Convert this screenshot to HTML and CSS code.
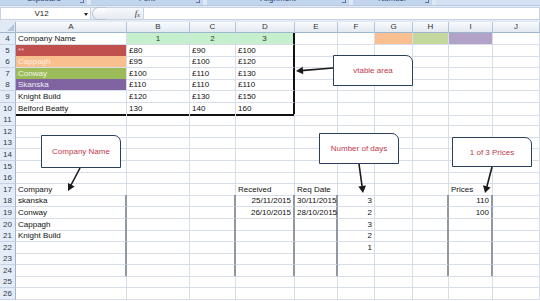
FILE: index.html
```html
<!DOCTYPE html>
<html>
<head>
<meta charset="utf-8">
<link rel="stylesheet" href="styles.css">
</head>
<body>
<div class="app">
  <div class="ribbon">
    <div class="grp g1"><span>Clipboard</span><i class="launch"></i></div>
    <div class="grp g2"><span>Font</span><i class="launch"></i></div>
    <div class="grp g3"><span>Alignment</span><i class="launch"></i></div>
    <div class="grp g4"><span>Number</span><i class="launch"></i></div>
    <div class="grp g5"></div>
  </div>
  <div class="fbar">
    <div class="namebox"><span class="nb-text">V12</span><span class="nb-arrow"></span></div>
    <div class="fxarea"><span class="knob"></span><span class="fx">f<sub>x</sub></span></div>
    <div class="finput"></div>
  </div>
  <div class="sheet">
    <div class="row hdr"><div class="corner"></div><div class="ch">A</div><div class="ch">B</div><div class="ch">C</div><div class="ch">D</div><div class="ch">E</div><div class="ch">F</div><div class="ch">G</div><div class="ch">H</div><div class="ch">I</div><div class="ch">J</div></div>
    <div class="row"><div class="rh">4</div><div class="c">Company Name</div><div class="c grn ctr">1</div><div class="c grn ctr">2</div><div class="c grn ctr br">3</div><div class="c"></div><div class="c"></div><div class="c org"></div><div class="c grn2"></div><div class="c pur"></div><div class="c"></div></div>
    <div class="row"><div class="rh">5</div><div class="c red">**</div><div class="c">£80</div><div class="c">£90</div><div class="c br">£100</div><div class="c"></div><div class="c"></div><div class="c"></div><div class="c"></div><div class="c"></div><div class="c"></div></div>
    <div class="row"><div class="rh">6</div><div class="c orgA">Cappagh</div><div class="c">£95</div><div class="c">£100</div><div class="c br">£120</div><div class="c"></div><div class="c"></div><div class="c"></div><div class="c"></div><div class="c"></div><div class="c"></div></div>
    <div class="row"><div class="rh">7</div><div class="c grnA">Conway</div><div class="c">£100</div><div class="c">£110</div><div class="c br">£130</div><div class="c"></div><div class="c"></div><div class="c"></div><div class="c"></div><div class="c"></div><div class="c"></div></div>
    <div class="row"><div class="rh">8</div><div class="c purA">Skanska</div><div class="c">£110</div><div class="c">£110</div><div class="c br">£110</div><div class="c"></div><div class="c"></div><div class="c"></div><div class="c"></div><div class="c"></div><div class="c"></div></div>
    <div class="row"><div class="rh">9</div><div class="c">Knight Build</div><div class="c">£120</div><div class="c">£130</div><div class="c br">£150</div><div class="c"></div><div class="c"></div><div class="c"></div><div class="c"></div><div class="c"></div><div class="c"></div></div>
    <div class="row"><div class="rh">10</div><div class="c bb">Belford Beatty</div><div class="c bb">130</div><div class="c bb">140</div><div class="c bb br">160</div><div class="c"></div><div class="c"></div><div class="c"></div><div class="c"></div><div class="c"></div><div class="c"></div></div>
    <div class="row"><div class="rh">11</div><div class="c"></div><div class="c"></div><div class="c"></div><div class="c"></div><div class="c"></div><div class="c"></div><div class="c"></div><div class="c"></div><div class="c"></div><div class="c"></div></div>
    <div class="row"><div class="rh">12</div><div class="c"></div><div class="c"></div><div class="c"></div><div class="c"></div><div class="c"></div><div class="c"></div><div class="c"></div><div class="c"></div><div class="c"></div><div class="c"></div></div>
    <div class="row"><div class="rh">13</div><div class="c"></div><div class="c"></div><div class="c"></div><div class="c"></div><div class="c"></div><div class="c"></div><div class="c"></div><div class="c"></div><div class="c"></div><div class="c"></div></div>
    <div class="row"><div class="rh">14</div><div class="c"></div><div class="c"></div><div class="c"></div><div class="c"></div><div class="c"></div><div class="c"></div><div class="c"></div><div class="c"></div><div class="c"></div><div class="c"></div></div>
    <div class="row"><div class="rh">15</div><div class="c"></div><div class="c"></div><div class="c"></div><div class="c"></div><div class="c"></div><div class="c"></div><div class="c"></div><div class="c"></div><div class="c"></div><div class="c"></div></div>
    <div class="row"><div class="rh">16</div><div class="c"></div><div class="c"></div><div class="c"></div><div class="c"></div><div class="c"></div><div class="c"></div><div class="c"></div><div class="c"></div><div class="c"></div><div class="c"></div></div>
    <div class="row"><div class="rh">17</div><div class="c">Company</div><div class="c"></div><div class="c"></div><div class="c">Received</div><div class="c">Req Date</div><div class="c"></div><div class="c"></div><div class="c"></div><div class="c">Prices</div><div class="c"></div></div>
    <div class="row"><div class="rh">18</div><div class="c vl">skanska</div><div class="c"></div><div class="c vl"></div><div class="c vl n">25/11/2015</div><div class="c vl n">30/11/2015</div><div class="c n">3</div><div class="c"></div><div class="c vl"></div><div class="c vl n">110</div><div class="c"></div></div>
    <div class="row"><div class="rh">19</div><div class="c vl">Conway</div><div class="c"></div><div class="c vl"></div><div class="c vl n">26/10/2015</div><div class="c vl n">28/10/2015</div><div class="c n">2</div><div class="c"></div><div class="c vl"></div><div class="c vl n">100</div><div class="c"></div></div>
    <div class="row"><div class="rh">20</div><div class="c vl">Cappagh</div><div class="c"></div><div class="c vl"></div><div class="c vl"></div><div class="c vl"></div><div class="c n">3</div><div class="c"></div><div class="c vl"></div><div class="c vl"></div><div class="c"></div></div>
    <div class="row"><div class="rh">21</div><div class="c vl">Knight Build</div><div class="c"></div><div class="c vl"></div><div class="c vl"></div><div class="c vl"></div><div class="c n">2</div><div class="c"></div><div class="c vl"></div><div class="c vl"></div><div class="c"></div></div>
    <div class="row"><div class="rh">22</div><div class="c vl"></div><div class="c"></div><div class="c vl"></div><div class="c vl"></div><div class="c vl"></div><div class="c n">1</div><div class="c"></div><div class="c vl"></div><div class="c vl"></div><div class="c"></div></div>
    <div class="row"><div class="rh">23</div><div class="c vl"></div><div class="c"></div><div class="c vl"></div><div class="c vl"></div><div class="c vl"></div><div class="c"></div><div class="c"></div><div class="c vl"></div><div class="c vl"></div><div class="c"></div></div>
    <div class="row"><div class="rh">24</div><div class="c vl"></div><div class="c"></div><div class="c vl"></div><div class="c vl"></div><div class="c vl"></div><div class="c"></div><div class="c"></div><div class="c vl"></div><div class="c vl"></div><div class="c"></div></div>
    <div class="row"><div class="rh">25</div><div class="c"></div><div class="c"></div><div class="c"></div><div class="c"></div><div class="c"></div><div class="c"></div><div class="c"></div><div class="c"></div><div class="c"></div><div class="c"></div></div>
    <div class="row"><div class="rh">26</div><div class="c"></div><div class="c"></div><div class="c"></div><div class="c"></div><div class="c"></div><div class="c"></div><div class="c"></div><div class="c"></div><div class="c"></div><div class="c"></div></div>
  </div>

  <svg class="arrows" width="540" height="301" viewBox="0 0 540 301">
    <g stroke="#1a1a1a" stroke-width="1.6" fill="none">
      <line x1="333" y1="68" x2="301" y2="70.6"/>
      <line x1="80" y1="168" x2="70.5" y2="186"/>
      <line x1="359" y1="164" x2="362.3" y2="188"/>
      <line x1="492" y1="167" x2="486.5" y2="188"/>
    </g>
    <g fill="#1a1a1a">
      <polygon points="296,71 303.3,74.2 302.7,66.8"/>
      <polygon points="68,191 74.6,186.6 68,182.9"/>
      <polygon points="363,193 366,185.4 358.3,186.6"/>
      <polygon points="485,193 490.6,187.4 483,185.2"/>
    </g>
  </svg>
  <div class="callout co1">vtable area</div>
  <div class="callout co2">Company Name</div>
  <div class="callout co3">Number of days</div>
  <div class="callout co4">1 of 3 Prices</div>
</div>
</body>
</html>
```

FILE: styles.css
```css
* { box-sizing: border-box; }
html, body { margin: 0; padding: 0; }
body {
  width: 540px;
  height: 301px;
  overflow: hidden;
  background: #ffffff;
  font-family: "Liberation Sans", Arial, sans-serif;
  font-size: 8px;
  color: #111;
}
.app { position: relative; width: 540px; height: 301px; overflow: hidden; }

/* ribbon strip (cut off group labels) */
.ribbon {
  height: 5px;
  display: flex;
  gap: 4px;
  background: #dde8f5;
  overflow: hidden;
}
.grp {
  position: relative;
  height: 5px;
  background: #c3d5ec;
  overflow: hidden;
  text-align: center;
  color: #1e3f72;
}
.grp span { display: block; line-height: 8px; margin-top: -5px; font-size: 8px; }
.grp .launch {
  position: absolute; right: 3px; top: 0; width: 4px; height: 3px;
  border-right: 1px solid #5d7ba5; border-bottom: 1px solid #5d7ba5;
}
.g1 { width: 87px; }
.g2 { width: 112px; }
.g3 { width: 142px; }
.g4 { width: 79px; }
.g5 { flex: 1; background: #d3e1f2; }

/* formula bar */
.fbar {
  height: 17px;
  display: flex;
  align-items: flex-start;
  padding-top: 1px;
  background: #e3eaf4;
  border-top: 1px solid #b9cbe2;
}
.namebox {
  width: 91px;
  height: 13px;
  background: #fff;
  border: 1px solid #c7d3e3;
  display: flex;
  align-items: center;
  position: relative;
}
.nb-text { flex: 1; text-align: center; font-size: 8px; color: #222; padding-right: 8px; }
.nb-arrow {
  position: absolute; right: 2px; top: 5px;
  width: 0; height: 0;
  border-left: 2.5px solid transparent; border-right: 2.5px solid transparent;
  border-top: 3px solid #222;
}
.fxarea {
  width: 52px;
  height: 13px;
  position: relative;
  background: linear-gradient(#f6f8fb, #e6ebf2);
  border-top: 1px solid #c7d3e3;
  border-bottom: 1px solid #c7d3e3;
}
.knob {
  position: absolute; left: 1px; top: -1px;
  width: 14px; height: 13px;
  border-radius: 7px 0 0 7px;
  border: 1px solid #b8c4d4;
  border-right: none;
  background: linear-gradient(#ffffff, #e2e8f0);
}
.fx {
  position: absolute; right: 3px; top: 0;
  font-family: "Liberation Serif", serif;
  font-style: italic; font-size: 9px; line-height: 11px; color: #333;
}
.fx sub { font-size: 6px; vertical-align: baseline; position: relative; top: 1px; }
.finput {
  flex: 1;
  height: 13px;
  background: #fff;
  border: 1px solid #c7d3e3;
}

/* sheet */
.sheet { display: flex; flex-direction: column; }
.row {
  display: grid;
  grid-template-columns: 16px 111px 63px 46px 59px 43px 37px 38px 36px 44px 47px;
  height: 11.6px;
}
.row.hdr { height: 11px; }
.corner {
  position: relative;
  background: #e1e9f4;
  border-right: 1px solid #9eb6ce;
  border-bottom: 1px solid #9eb6ce;
}
.corner::after {
  content: "";
  position: absolute; right: 1px; bottom: 1px;
  width: 0; height: 0;
  border-left: 7px solid transparent;
  border-bottom: 7px solid #b6c6da;
}
.ch {
  background: linear-gradient(#f8fafd, #e3e9f1);
  border-right: 1px solid #b4c4d8;
  border-bottom: 1px solid #9eb6ce;
  text-align: center;
  line-height: 10px;
  color: #333;
}
.rh {
  background: #e4ecf7;
  border-right: 1px solid #9eb6ce;
  border-bottom: 1px solid #c5d3e6;
  text-align: center;
  line-height: 11px;
  color: #2f3a48;
}
.c {
  border-right: 1px solid #d8dee9;
  border-bottom: 1px solid #d8dee9;
  padding: 0 2px;
  line-height: 11px;
  white-space: nowrap;
  overflow: visible;
}
.n { text-align: right; }
.ctr { text-align: center; }
.grn { background: #c6efce; color: #1f3d22; }
.org { background: #f9bf90; }
.grn2 { background: #c4d79c; }
.pur { background: #b2a2c8; }
.red { background: #c0504d; color: #f3c7c5; }
.orgA { background: #fabf8f; color: #fdeee0; }
.grnA { background: #9bbb59; color: #f2f8e6; }
.purA { background: #8064a2; color: #efe9f6; }
.br { border-right: 2px solid #111; }
.bb { border-bottom: 2px solid #111; }
.vl { border-right: 2px solid #9198a2; }

/* overlays */
.arrows { position: absolute; left: 0; top: 0; pointer-events: none; }
.callout {
  position: absolute;
  background: #fff;
  border: 1.5px solid #2a3f5c;
  border-radius: 0 7px 0 0;
  color: #c0394b;
  font-size: 8px;
  display: flex;
  align-items: center;
  justify-content: center;
  white-space: nowrap;
}
.co1 { left: 333px; top: 55px; width: 80px; height: 31px; }
.co2 { left: 41px; top: 135px; width: 80px; height: 33px; }
.co3 { left: 319px; top: 133px; width: 80px; height: 31px; }
.co4 { left: 452px; top: 137px; width: 80px; height: 30px; }
```
